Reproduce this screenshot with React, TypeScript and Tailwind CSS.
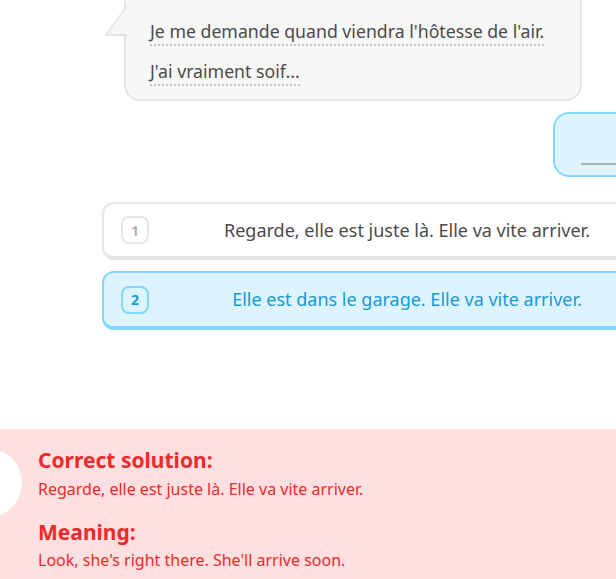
export default function App() {
  const font = { fontFamily: '"Noto Sans", "Liberation Sans", sans-serif' };
  return (
    <div
      className="relative w-[616px] h-[579px] overflow-hidden bg-white"
      style={font}
    >
      {/* speech bubble from the character */}
      <div className="relative ml-[124px] -mt-[16px] w-[458px] rounded-[16px] border-2 border-[#e5e5e5] bg-[#f7f7f7] pl-[24px] pr-4 pt-[33px] pb-[16px] text-[17.7px] text-[#4b4b4b]">
        <svg
          className="absolute left-[-22px] top-[18px]"
          width="24"
          height="34"
          viewBox="0 0 24 34"
        >
          <path d="M23 2 L2 31 L23 31 Z" fill="#f7f7f7" />
          <path d="M23 2 L2 31 L23 31" fill="none" stroke="#e5e5e5" strokeWidth="2" strokeLinejoin="round" />
        </svg>
        <div className="leading-[24px]">
          <span className="border-b-2 border-dotted border-[#c4c4c4] pb-[1px]">
            Je me demande quand viendra l'hôtesse de l'air.
          </span>
        </div>
        <div className="mt-[16px] leading-[24px]">
          <span className="border-b-2 border-dotted border-[#c4c4c4] pb-[1px]">
            J'ai vraiment soif...
          </span>
        </div>
      </div>

      {/* answer box */}
      <div className="ml-[553px] mt-[11px] flex h-[65px] w-[90px] items-end rounded-[16px] border-2 border-[#84d8ff] bg-[#ddf4ff] pb-[10px] pl-[26px]">
        <div className="h-[2px] w-full bg-[#afafaf]" />
      </div>

      {/* choices */}
      <div className="ml-[102px] mt-[25px] flex flex-col gap-[11px]">
        <div className="flex h-[58px] w-[582px] items-center rounded-[12px] border-2 border-b-4 border-[#e5e5e5] bg-white px-[17px]">
          <div className="flex h-[28px] w-[28px] items-center justify-center rounded-[8px] border-2 border-[#e5e5e5] text-[14px] font-bold text-[#afafaf]">
            1
          </div>
          <div className="flex-1 text-center text-[18px] text-[#4b4b4b]">
            Regarde, elle est juste là. Elle va vite arriver.
          </div>
        </div>
        <div className="flex h-[59px] w-[582px] items-center rounded-[12px] border-2 border-b-4 border-[#84d8ff] bg-[#ddf4ff] px-[17px]">
          <div className="flex h-[28px] w-[28px] items-center justify-center rounded-[8px] border-2 border-[#84d8ff] text-[14px] font-bold text-[#1899d6]">
            2
          </div>
          <div className="flex-1 text-center text-[18px] text-[#1899d6]">
            Elle est dans le garage. Elle va vite arriver.
          </div>
        </div>
      </div>

      {/* feedback */}
      <div className="absolute bottom-0 left-0 right-0 h-[150px] bg-[#ffdfe0] pl-[38px] pt-[18px] text-[#ea2b2b]">
        <div className="absolute left-[-48px] top-[19px] h-[70px] w-[70px] rounded-full bg-white" />
        <div className="text-[21px] font-bold leading-[26px]">Correct solution:</div>
        <div className="mt-[5px] text-[16px] leading-[22px]">
          Regarde, elle est juste là. Elle va vite arriver.
        </div>
        <div className="mt-[19px] text-[21px] font-bold leading-[26px]">Meaning:</div>
        <div className="mt-[4px] text-[16px] leading-[22px]">
          Look, she's right there. She'll arrive soon.
        </div>
      </div>
    </div>
  );
}
